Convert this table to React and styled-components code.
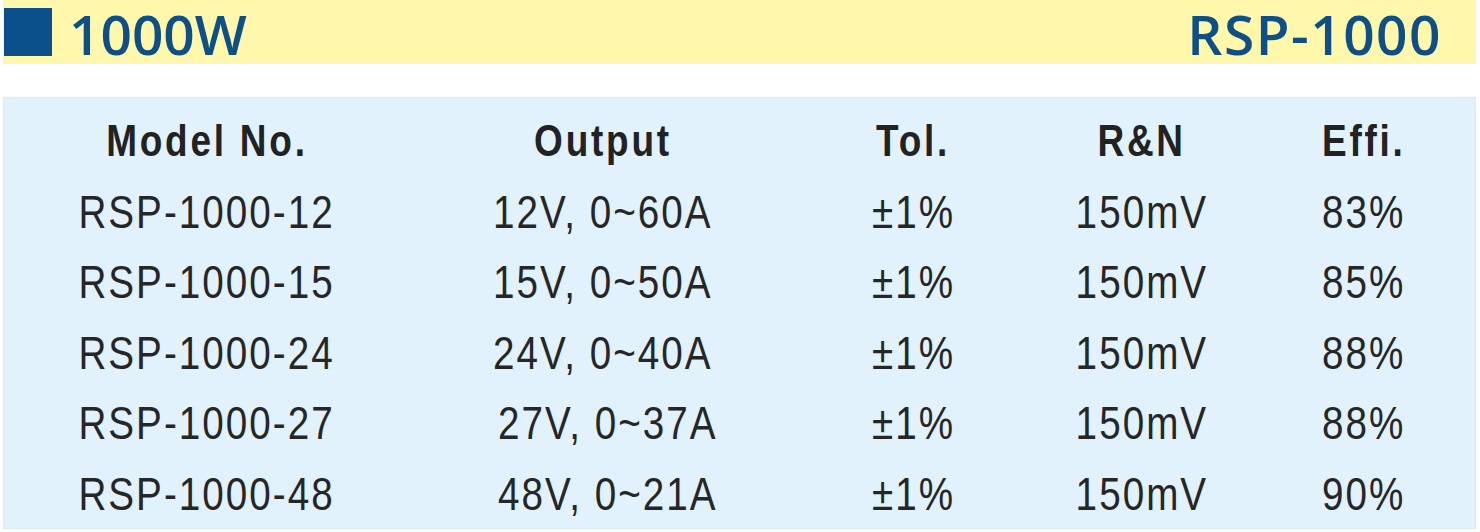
import React from 'react';
import styled, { createGlobalStyle } from 'styled-components';

const GlobalStyle = createGlobalStyle`
    html, body {
        margin: 0;
        padding: 0;
        background: #ffffff;
    }
`;

const rows = [
    { model: 'RSP-1000-12', output: '12V, 0~60A', tol: '±1%', rn: '150mV', effi: '83%' },
    { model: 'RSP-1000-15', output: '15V, 0~50A', tol: '±1%', rn: '150mV', effi: '85%' },
    { model: 'RSP-1000-24', output: '24V, 0~40A', tol: '±1%', rn: '150mV', effi: '88%' },
    { model: 'RSP-1000-27', output: '27V, 0~37A', tol: '±1%', rn: '150mV', effi: '88%', shift: 5 },
    { model: 'RSP-1000-48', output: '48V, 0~21A', tol: '±1%', rn: '150mV', effi: '90%', shift: 5 },
];

const App = () => {
    return (
        <Page>
            <GlobalStyle />
            <TitleBar>
                <TitleLeft>
                    <Square />
                    <Title>1000W</Title>
                </TitleLeft>
                <Title $wide>RSP-1000</Title>
            </TitleBar>

            <Panel>
                <Row>
                    <Cell><HeadText>Model No.</HeadText></Cell>
                    <Cell><HeadText>Output</HeadText></Cell>
                    <Cell><HeadText>Tol.</HeadText></Cell>
                    <Cell><HeadText>R&amp;N</HeadText></Cell>
                    <Cell><HeadText>Effi.</HeadText></Cell>
                </Row>
                {rows.map((r) => (
                    <Row key={r.model}>
                        <Cell><BodyText>{r.model}</BodyText></Cell>
                        <Cell $shift={r.shift}><BodyText>{r.output}</BodyText></Cell>
                        <Cell><BodyText>{r.tol}</BodyText></Cell>
                        <Cell><BodyText>{r.rn}</BodyText></Cell>
                        <Cell><BodyText>{r.effi}</BodyText></Cell>
                    </Row>
                ))}
            </Panel>
        </Page>
    );
};

const Page = styled.div`
    width: 1480px;
    height: 532px;
    padding: 0 4px 0 3px;
    box-sizing: border-box;
    display: flex;
    flex-direction: column;
    gap: 33px;
`;

const TitleBar = styled.header`
    height: 64px;
    background: #fff7ab;
    display: flex;
    align-items: center;
    justify-content: space-between;
    padding: 0 34px 0 1px;
`;

const TitleLeft = styled.div`
    display: flex;
    align-items: center;
    gap: 17px;
`;

const Square = styled.span`
    display: block;
    width: 48px;
    height: 48px;
    background: #0b4f8b;
`;

const Title = styled.h1`
    margin: 0;
    font-family: 'Open Sans', sans-serif;
    font-weight: 600;
    font-size: 55px;
    line-height: 60px;
    letter-spacing: ${(p) => (p.$wide ? '1.5px' : '0')};
    color: #0e4f86;
    transform: translateY(2px);
`;

const Panel = styled.section`
    height: 432px;
    box-sizing: border-box;
    padding-top: 9px;
    background: #e1f2fc;
    box-shadow: inset 0 0 2px rgba(180, 205, 220, 0.6);
`;

const Row = styled.div`
    display: grid;
    grid-template-columns: 408px 384px 236px 222px 221px;
    height: 70.5px;
    align-items: center;
`;

const Cell = styled.div`
    display: flex;
    justify-content: center;
    padding-left: ${(p) => (p.$shift ? p.$shift * 2 : 0)}px;
`;

const HeadText = styled.span`
    display: inline-block;
    white-space: nowrap;
    font-family: 'Liberation Sans', Arial, sans-serif;
    font-weight: 700;
    font-size: 44px;
    letter-spacing: 3.3px;
    color: #222222;
    transform: scaleX(0.84);
`;

const BodyText = styled.span`
    display: inline-block;
    white-space: nowrap;
    font-family: 'Liberation Sans', Arial, sans-serif;
    font-weight: 400;
    font-size: 46px;
    letter-spacing: 2.4px;
    color: #262626;
    transform: scaleX(0.84);
`;

export default App;
